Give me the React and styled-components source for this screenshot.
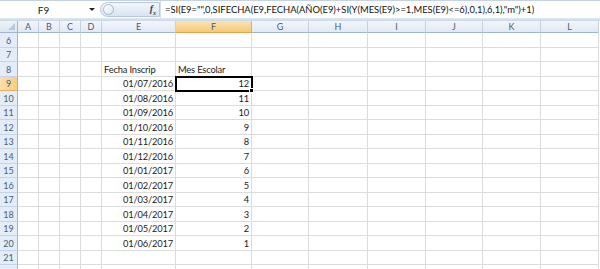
import React from 'react';
import styled, { createGlobalStyle } from 'styled-components';

const COLS = ['A', 'B', 'C', 'D', 'E', 'F', 'G', 'H', 'I', 'J', 'K', 'L'];
const TEMPLATE = '18px 21px 21px 21px 21px 74px 76px 57px 59px 58px 57px 58px 58px';

const data = [
    ['01/07/2016', 12],
    ['01/08/2016', 11],
    ['01/09/2016', 10],
    ['01/10/2016', 9],
    ['01/11/2016', 8],
    ['01/12/2016', 7],
    ['01/01/2017', 6],
    ['01/02/2017', 5],
    ['01/03/2017', 4],
    ['01/04/2017', 3],
    ['01/05/2017', 2],
    ['01/06/2017', 1],
];

const FORMULA = '=SI(E9="",0,SIFECHA(E9,FECHA(AÑO(E9)+SI(Y(MES(E9)>=1,MES(E9)<=6),0,1),6,1),"m")+1)';

const cellText = (row, col) => {
    if (row === 8 && col === 'E') return { text: 'Fecha Inscrip' };
    if (row === 8 && col === 'F') return { text: 'Mes Escolar' };
    const d = data[row - 9];
    if (!d) return null;
    if (col === 'E') return { text: d[0], right: true };
    if (col === 'F') return { text: d[1], right: true };
    return null;
};

const App = () => {
    const rows = [];
    for (let r = 6; r <= 22; r++) rows.push(r);

    return (
        <>
            <GlobalStyle />
            <Sheet>
                <FormulaBar>
                    <NameBox>
                        <span>F9</span>
                        <Arrow />
                    </NameBox>
                    <Gap />
                    <Capsule>
                        <Knob />
                        <Fx>f<sub>x</sub></Fx>
                    </Capsule>
                    <FormulaInput>{FORMULA}</FormulaInput>
                </FormulaBar>
                <Strip />

                <HeaderRow>
                    <Corner />
                    {COLS.map((c) => (
                        <ColHead key={c} $active={c === 'F'}>{c}</ColHead>
                    ))}
                </HeaderRow>

                {rows.map((r, i) => (
                    <Row key={r} $h={i % 2 === 0 ? 15 : 14}>
                        {/* row 22 is only a sliver at the bottom edge, no label shown */}
                        <RowHead $active={r === 9}>{r < 22 ? r : ''}</RowHead>
                        {COLS.map((c) => {
                            const v = cellText(r, c);
                            return (
                                <Cell key={c} $right={v && v.right} $selected={r === 9 && c === 'F'}>
                                    {v ? v.text : ''}
                                </Cell>
                            );
                        })}
                    </Row>
                ))}
            </Sheet>
        </>
    );
};

const GlobalStyle = createGlobalStyle`
  html, body {
    margin: 0;
    padding: 0;
    background: #fff;
    overflow: hidden;
  }
  body {
    font-family: Lato, "Open Sans", sans-serif;
  }
`;

const Sheet = styled.div`
  width: 600px;
  height: 269px;
  overflow: hidden;
  background: #fff;
`;

const FormulaBar = styled.div`
  display: flex;
  height: 18px;
  background: #fff;
  border-top: 1px solid #c5d2e2;
  box-sizing: border-box;
`;

const NameBox = styled.div`
  width: 97px;
  display: flex;
  align-items: center;
  justify-content: center;
  position: relative;
  font-size: 10px;
  color: #222;

  & > span {
    margin-right: 10px;
  }
`;

const Arrow = styled.div`
  position: absolute;
  right: 2px;
  top: 7px;
  width: 0;
  height: 0;
  border-left: 3px solid transparent;
  border-right: 3px solid transparent;
  border-top: 3px solid #222;
`;

const Gap = styled.div`
  width: 3px;
  background: #fff;
`;

const Capsule = styled.div`
  width: 60px;
  margin: 1px 0;
  display: flex;
  align-items: center;
  justify-content: space-between;
  border: 1px solid #b7c6d9;
  border-radius: 8px 0 0 8px;
  background: linear-gradient(#f2f6fb, #d9e4f1);
  box-sizing: border-box;
  padding: 0 3px 0 2px;
`;

const Knob = styled.div`
  width: 11px;
  height: 11px;
  border-radius: 50%;
  border: 1px solid #a7b8cd;
  background: linear-gradient(135deg, #ffffff, #dce6f2);
  box-sizing: border-box;
`;

const Fx = styled.div`
  font-family: "Liberation Serif", serif;
  font-style: italic;
  font-weight: bold;
  font-size: 10px;
  color: #444;

  & > sub {
    font-size: 6px;
  }
`;

const FormulaInput = styled.div`
  flex: 1;
  display: flex;
  align-items: center;
  padding-left: 4px;
  font-size: 9.4px;
  color: #111;
  white-space: nowrap;
  overflow: hidden;
  border-left: 1px solid #d4dde8;
`;

const Strip = styled.div`
  height: 3px;
  background: linear-gradient(#dfe8f3, #c9d7e8);
`;

const HeaderRow = styled.div`
  display: grid;
  grid-template-columns: ${TEMPLATE};
  height: 12px;
`;

const Corner = styled.div`
  background: linear-gradient(#eef3f9, #dbe5f1);
  border-right: 1px solid #9eb6ce;
  border-bottom: 1px solid #9eb6ce;
  box-sizing: border-box;
  position: relative;

  &::after {
    content: '';
    position: absolute;
    right: 2px;
    bottom: 2px;
    border-left: 7px solid transparent;
    border-bottom: 7px solid #b9c9dc;
  }
`;

const ColHead = styled.div`
  display: flex;
  align-items: center;
  justify-content: center;
  font-size: 9px;
  color: #4a5d78;
  background: ${(p) => (p.$active ? 'linear-gradient(#fbe3b3, #f6c976)' : 'linear-gradient(#f3f6fb, #e1e9f4)')};
  border-right: 1px solid ${(p) => (p.$active ? '#e2b160' : '#c3d1e1')};
  border-bottom: 1px solid ${(p) => (p.$active ? '#e2a64a' : '#9eb6ce')};
  box-sizing: border-box;
`;

const Row = styled.div`
  display: grid;
  grid-template-columns: ${TEMPLATE};
  height: ${(p) => p.$h}px;
`;

const RowHead = styled.div`
  display: flex;
  align-items: center;
  justify-content: center;
  font-size: 9px;
  color: #4a5d78;
  background: ${(p) => (p.$active ? 'linear-gradient(90deg, #fbe0ad, #f7cd80)' : '#e4ecf7')};
  border-right: 1px solid #9eb6ce;
  border-bottom: 1px solid ${(p) => (p.$active ? '#e2b160' : '#c5d4e6')};
  box-sizing: border-box;
`;

const Cell = styled.div`
  display: flex;
  align-items: flex-end;
  justify-content: ${(p) => (p.$right ? 'flex-end' : 'flex-start')};
  padding: 0 2px 1px 2px;
  font-size: 9.3px;
  letter-spacing: -0.15px;
  color: #1a1a1a;
  white-space: nowrap;
  border-right: 1px solid #dadcdd;
  border-bottom: 1px solid #dadcdd;
  box-sizing: border-box;
  position: relative;

  ${(p) =>
        p.$selected &&
        `
    outline: 2px solid #000;
    outline-offset: -1px;
    z-index: 2;
    &::after {
      content: '';
      position: absolute;
      right: -3px;
      bottom: -3px;
      width: 5px;
      height: 5px;
      background: #000;
      border: 1px solid #fff;
      box-sizing: border-box;
    }
  `}
`;

export default App;
